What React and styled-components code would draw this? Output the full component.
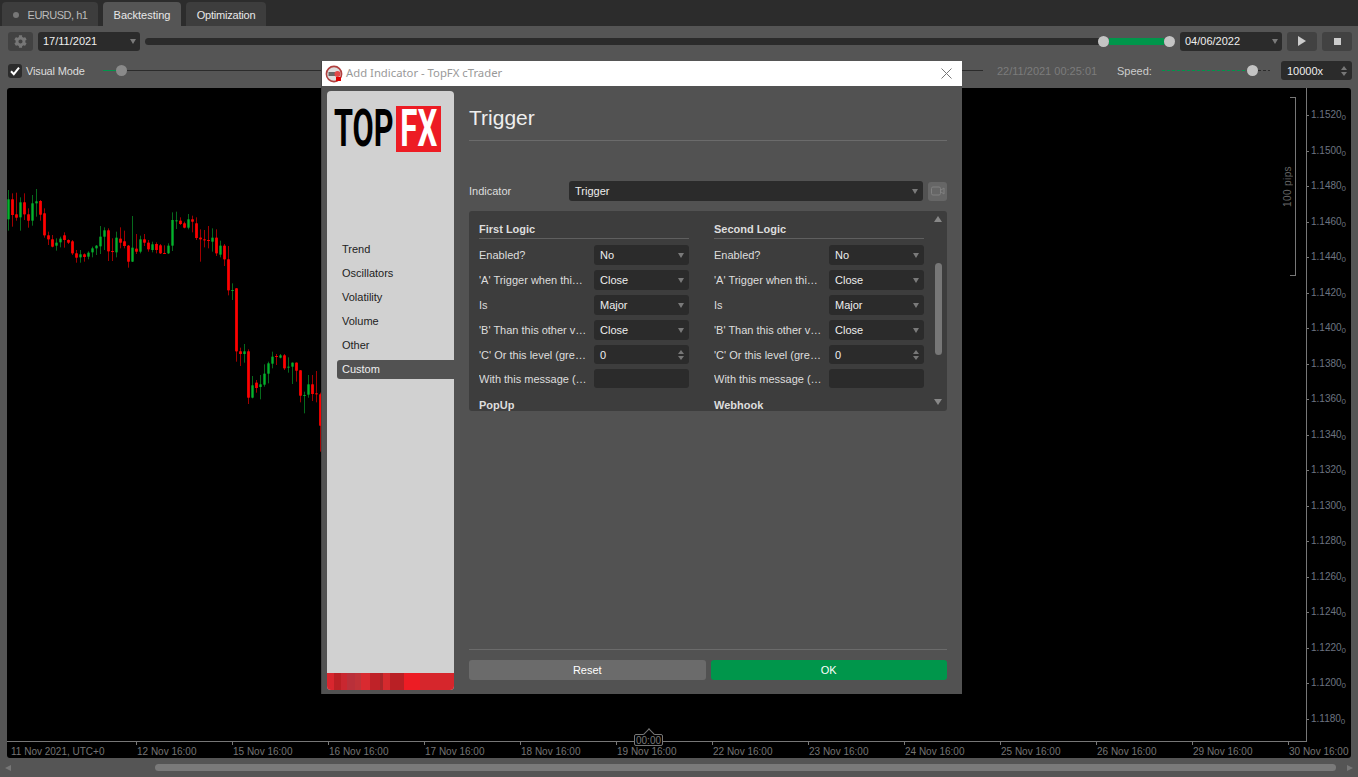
import React from 'react';
import styled, { createGlobalStyle } from 'styled-components';
import { FaCog } from 'react-icons/fa';

const GlobalStyle = createGlobalStyle`
  html, body {
    margin: 0;
    padding: 0;
    background: #555;
  }
  * {
    box-sizing: border-box;
  }
`;

// color, high, top, bottom, low -- measured off the chart
const CANDLES = [
  ['g', 60, 88, 148, 182], ['r', 70, 88, 135, 170], ['r', 68, 133, 143, 152], ['g', 82, 97, 142, 182],
  ['r', 70, 97, 133, 150], ['r', 115, 133, 152, 173], ['g', 75, 100, 152, 167], ['g', 57, 94, 100, 140],
  ['r', 90, 93, 134, 152], ['r', 115, 130, 196, 203], ['r', 185, 196, 208, 225], ['r', 195, 208, 230, 232],
  ['g', 205, 218, 227, 242], ['g', 200, 206, 217, 232], ['r', 187, 196, 210, 233], ['r', 208, 210, 218, 222],
  ['r', 210, 214, 250, 255], ['r', 240, 250, 263, 278], ['g', 240, 253, 262, 278], ['r', 250, 253, 261, 275],
  ['g', 244, 248, 260, 268], ['g', 230, 235, 247, 262], ['g', 225, 227, 235, 255], ['g', 168, 200, 229, 252],
  ['g', 172, 181, 200, 240], ['r', 175, 181, 244, 273], ['r', 205, 243, 246, 273], ['g', 185, 203, 247, 262],
  ['r', 172, 206, 218, 235], ['r', 182, 214, 228, 235], ['r', 225, 227, 275, 293], ['g', 138, 233, 275, 276],
  ['r', 192, 236, 245, 252], ['g', 197, 208, 245, 250], ['r', 192, 208, 218, 228], ['r', 210, 218, 238, 245],
  ['g', 215, 223, 240, 247], ['r', 217, 222, 240, 250], ['r', 222, 226, 250, 252], ['r', 226, 249, 251, 252],
  ['g', 220, 227, 250, 252], ['g', 127, 150, 227, 243], ['g', 125, 151, 153, 177], ['r', 142, 152, 162, 165],
  ['r', 155, 160, 173, 175], ['g', 132, 148, 173, 178], ['r', 137, 148, 155, 187], ['r', 142, 160, 204, 210],
  ['r', 178, 203, 208, 275], ['r', 180, 208, 210, 232], ['r', 168, 210, 212, 235], ['g', 175, 203, 215, 245],
  ['r', 178, 203, 250, 258], ['g', 212, 227, 254, 262], ['r', 222, 227, 268, 288], ['r', 228, 268, 361, 376],
  ['g', 340, 360, 362, 390], ['r', 355, 355, 544, 575], ['r', 533, 544, 552, 588], ['g', 522, 544, 552, 578],
  ['r', 538, 544, 683, 702], ['g', 618, 646, 683, 685], ['r', 630, 638, 654, 668], ['g', 615, 643, 651, 688],
  ['g', 583, 611, 644, 650], ['g', 575, 580, 611, 640], ['g', 545, 560, 581, 595], ['r', 552, 558, 560, 585],
  ['g', 552, 556, 563, 565], ['r', 552, 556, 595, 600], ['g', 562, 590, 592, 608], ['g', 578, 578, 590, 642],
  ['r', 578, 578, 602, 635], ['r', 601, 601, 677, 697], ['g', 665, 675, 678, 730], ['g', 615, 643, 674, 683],
  ['r', 615, 643, 672, 693], ['r', 603, 670, 672, 697], ['r', 668, 673, 767, 845],
];

const PRICES = ['1.1520', '1.1500', '1.1480', '1.1460', '1.1440', '1.1420', '1.1400', '1.1380', '1.1360', '1.1340',
  '1.1320', '1.1300', '1.1280', '1.1260', '1.1240', '1.1220', '1.1200', '1.1180'];

const DATES = ['12 Nov 16:00', '15 Nov 16:00', '16 Nov 16:00', '17 Nov 16:00', '18 Nov 16:00', '19 Nov 16:00', '22 Nov 16:00',
  '23 Nov 16:00', '24 Nov 16:00', '25 Nov 16:00', '26 Nov 16:00', '29 Nov 16:00', '30 Nov 16:00'];

const NAV = ['Trend', 'Oscillators', 'Volatility', 'Volume', 'Other', 'Custom'];

const Page = styled.div`
  position: relative;
  display: flex;
  flex-direction: column;
  width: 1358px;
  height: 777px;
  overflow: hidden;
  background: #555;
  color: #ddd;
  font: 11px 'Liberation Sans', Arial, sans-serif;
`;

const TabStrip = styled.div`
  display: flex;
  align-items: flex-end;
  gap: 5px;
  height: 26px;
  padding-left: 2px;
  background: #2c2c2c;
`;

const Tab = styled.div`
  display: flex;
  align-items: center;
  justify-content: center;
  gap: 9px;
  width: ${props => props.$width}px;
  height: 24px;
  padding-top: 2px;
  border-radius: 4px 4px 0 0;
  background: ${props => props.$active ? '#555' : '#3d3d3d'};
  color: ${props => props.$muted ? '#bbb' : '#e8e8e8'};
  letter-spacing: ${props => props.$tight || 0}px;
`;

const Dot = styled.span`
  width: 6px;
  height: 6px;
  border-radius: 50%;
  background: #777;
`;

const Toolbar = styled.div`
  display: flex;
  align-items: center;
  height: ${props => props.$height}px;
  padding: 0 6px 0 8px;
`;

const IconButton = styled.div`
  display: flex;
  align-items: center;
  justify-content: center;
  flex: none;
  width: ${props => props.$width}px;
  height: 19px;
  margin-left: ${props => props.$left || 0}px;
  border-radius: 3px;
  background: ${props => props.$bg || '#424242'};
  color: ${props => props.$color || '#ddd'};
`;

const Select = styled.div`
  display: flex;
  align-items: center;
  justify-content: space-between;
  flex: none;
  width: ${props => props.$width ? `${props.$width}px` : '100%'};
  height: ${props => props.$height || 20}px;
  margin-left: ${props => props.$left || 0}px;
  padding: 0 ${props => props.$pad || 6}px;
  border-radius: 3px;
  background: #2b2b2b;
  color: #eee;
`;

const Caret = styled.span`
  width: 0;
  height: 0;
  margin-right: -1px;
  border-left: 3px solid transparent;
  border-right: 3px solid transparent;
  border-top: 5px solid #7a7a7a;
`;

const SpinArrows = styled.span`
  display: flex;
  flex-direction: column;
  gap: 2px;
  margin-right: -1px;
  &::before, &::after {
    content: '';
    width: 0;
    height: 0;
    border-left: 3px solid transparent;
    border-right: 3px solid transparent;
  }
  &::before {
    border-bottom: 4px solid #777;
  }
  &::after {
    border-top: 4px solid #777;
  }
`;

const RangeSlider = styled.div`
  display: flex;
  align-items: center;
  flex: none;
  width: 1030px;
  margin-left: 5px;
`;

const RangeDark = styled.div`
  flex: 1;
  height: 7px;
  margin-right: -5px;
  border-radius: 4px 0 0 4px;
  background: #2b2b2b;
`;

const RangeGreen = styled.div`
  width: 55px;
  height: 7px;
  background: #00964b;
`;

const Knob = styled.span`
  position: relative;
  flex: none;
  width: ${props => props.$size || 11}px;
  height: ${props => props.$size || 11}px;
  border-radius: 50%;
  background: ${props => props.$color || '#c4c4c4'};
`;

const Check = styled.span`
  display: flex;
  align-items: center;
  justify-content: center;
  flex: none;
  width: 14px;
  height: 14px;
  border-radius: 3px;
  background: #2b2b2b;
`;

const CheckLabel = styled.span`
  width: 77px;
  margin-left: 4px;
  color: #ddd;
  letter-spacing: -.15px;
`;

const LineSlider = styled.div`
  display: flex;
  align-items: center;
  flex: none;
  width: ${props => props.$width}px;
`;

const Line = styled.span`
  width: ${props => props.$width ? `${props.$width}px` : 'auto'};
  flex: ${props => props.$width ? 'none' : 1};
  height: 1px;
  background: ${props => props.$dashed
    ? `repeating-linear-gradient(90deg, ${props.$color || '#2b2b2b'} 0 3px, transparent 3px 5px)`
    : props.$color || '#2b2b2b'};
`;

const TimeLabel = styled.span`
  width: 120px;
  margin-left: 14px;
  color: #7c7c7c;
`;

const SpeedLabel = styled.span`
  width: 45px;
  color: #ccc;
`;

const Chart = styled.div`
  display: grid;
  grid-template-columns: 1300px 44px;
  grid-template-rows: 654px 16px;
  width: 1344px;
  height: 670px;
  margin: 3px 0 0 7px;
  border-radius: 3px;
  overflow: hidden;
  background: #000;
`;

const Plot = styled.div`
  position: relative;
  grid-column: 1;
  grid-row: 1;
  border-right: 1px solid #777;
  border-bottom: 1px solid #777;
`;

const CandleSvg = styled.svg`
  display: block;
`;

const PipBracket = styled.div`
  position: absolute;
  top: 9px;
  left: 1283px;
  width: 6px;
  height: 179px;
  border: 1px solid #777;
  border-left: none;
`;

const PipLabel = styled.span`
  position: absolute;
  top: 78px;
  left: 1275px;
  color: #666;
  font-size: 10px;
  letter-spacing: .4px;
  writing-mode: vertical-rl;
  transform: rotate(180deg);
`;

const TimeMarker = styled.div`
  position: absolute;
  top: 646px;
  left: 627px;
  z-index: 2;
  width: 29px;
  height: 12px;
  border: 1px solid #777;
  border-radius: 2px;
  background: #000;
  color: #777;
  font-size: 10px;
  line-height: 11px;
  text-align: center;
  &::before {
    content: '';
    position: absolute;
    top: -5px;
    left: 10px;
    width: 7px;
    height: 7px;
    border-top: 1px solid #777;
    border-left: 1px solid #777;
    background: #000;
    transform: rotate(45deg);
    z-index: -1;
  }
`;

const PriceAxis = styled.div`
  grid-column: 2;
  grid-row: 1 / 3;
  padding-top: 19px;
`;

const Price = styled.div`
  position: relative;
  height: 35.5px;
  padding-left: 4px;
  color: #6c7480;
  font-size: 10px;
  line-height: 16px;
  &::before {
    content: '';
    position: absolute;
    top: 8px;
    left: -1px;
    width: 3px;
    border-top: 1px solid #777;
  }
  & small {
    position: relative;
    top: 2px;
    font-size: 8px;
  }
`;

const TimeAxis = styled.div`
  display: flex;
  grid-column: 1;
  grid-row: 2;
  position: relative;
  z-index: 1;
  min-width: 0;
`;

const DateCell = styled.div`
  position: relative;
  flex: none;
  width: ${props => props.$width}px;
  padding-left: ${props => props.$pad}px;
  color: #757575;
  font-size: 10px;
  line-height: 19px;
  white-space: nowrap;
  &::before {
    content: '';
    display: ${props => props.$first ? 'none' : 'block'};
    position: absolute;
    top: 0;
    left: 0;
    height: 3px;
    border-left: 1px solid #777;
  }
`;

const BottomBar = styled.div`
  display: flex;
  align-items: center;
  height: 19px;
  padding-left: 5px;
`;

const ArrowLeft = styled.span`
  width: 0;
  height: 0;
  border-top: 3px solid transparent;
  border-bottom: 3px solid transparent;
  border-right: 6px solid #777;
`;

const ArrowRight = styled.span`
  width: 0;
  height: 0;
  margin-left: 11px;
  border-top: 3px solid transparent;
  border-bottom: 3px solid transparent;
  border-left: 6px solid #777;
`;

const ScrollThumb = styled.div`
  width: 1181px;
  height: 7px;
  margin-left: 144px;
  border-radius: 4px;
  background: #7a7a7a;
`;

const Dialog = styled.div`
  position: absolute;
  top: 61px;
  left: 322px;
  display: flex;
  flex-direction: column;
  width: 640px;
  height: 633px;
  background: #525252;
  box-shadow: -1px 0 0 #444;
`;

const TitleBar = styled.div`
  display: flex;
  align-items: center;
  flex: none;
  height: 25px;
  padding: 0 10px 0 3px;
  background: #fff;
`;

const TitleText = styled.span`
  flex: 1;
  margin-left: 3px;
  padding-bottom: 2px;
  color: #999;
  font: 11.3px 'Noto Sans', 'Open Sans', sans-serif;
`;

const DialogBody = styled.div`
  display: flex;
  flex: 1;
  padding: 5px 0 4px 5px;
`;

const Sidebar = styled.div`
  display: flex;
  flex-direction: column;
  width: 127px;
  border-radius: 4px;
  overflow: hidden;
  background: #d1d1d1;
`;

const Logo = styled.div`
  display: flex;
  align-items: center;
  height: 46px;
  margin: 15px 0 0 7px;
`;

const LogoTop = styled.span`
  display: block;
  width: 62px;
  color: #000;
  font: 700 52px/46px 'Roboto', 'Liberation Sans', sans-serif;
  transform: scaleX(.59);
  transform-origin: left center;
  white-space: nowrap;
`;

const LogoBox = styled.span`
  display: flex;
  align-items: center;
  justify-content: center;
  width: 45px;
  height: 46px;
  background: #ed1c24;
  color: #fff;
  font: 700 52px/46px 'Roboto', 'Liberation Sans', sans-serif;
  & span {
    transform: scaleX(.6);
  }
`;

const Nav = styled.div`
  display: flex;
  flex-direction: column;
  gap: 5px;
  margin: 88px 0 0 10px;
`;

const NavItem = styled.div`
  height: 19px;
  padding-left: 5px;
  border-radius: 3px 0 0 3px;
  background: ${props => props.$active ? '#525252' : 'transparent'};
  color: ${props => props.$active ? '#eee' : '#222'};
  line-height: 19px;
`;

const Strip = styled.div`
  height: 17px;
  margin-top: auto;
  background: linear-gradient(90deg,
    #d8262e 0 7px, #bb2025 7px 14px, #c92730 14px 20px, #b9303a 20px 28px, #c03238 28px 34px,
    #d92a30 34px 43px, #bf2228 43px 53px, #a8262a 53px 56px, #d42a2e 56px 63px, #b92025 63px 77px,
    #ed1c24 77px 93px, #d6262c 93px);
`;

const Main = styled.div`
  display: flex;
  flex-direction: column;
  flex: 1;
  padding: 0 15px;
`;

const Heading = styled.h1`
  height: 50px;
  margin: 0;
  padding-top: 14px;
  border-bottom: 1px solid #6b6b6b;
  color: #eee;
  font: 400 21px/26px 'Liberation Sans', Arial, sans-serif;
`;

const IndicatorRow = styled.div`
  display: flex;
  align-items: center;
  margin-top: 40px;
`;

const IndicatorLabel = styled.span`
  width: 100px;
  color: #ddd;
`;

const Panel = styled.div`
  display: flex;
  flex: none;
  height: 200px;
  margin-top: 10px;
  padding-left: 10px;
  border-radius: 3px;
  overflow: hidden;
  background: #3d3d3d;
`;

const Columns = styled.div`
  display: grid;
  grid-template-columns: 210px 210px;
  gap: 25px;
`;

const Column = styled.div`
  display: flex;
  flex-direction: column;
`;

const GroupTitle = styled.div`
  flex: none;
  height: 17px;
  margin-top: ${props => props.$top}px;
  border-bottom: ${props => props.$plain ? 'none' : '1px solid #5f5f5f'};
  color: #ddd;
  font-weight: 700;
  line-height: 14px;
`;

const Rows = styled.div`
  display: flex;
  flex-direction: column;
  gap: 5px;
  margin-top: 6px;
`;

const Field = styled.div`
  display: grid;
  grid-template-columns: 115px 95px;
  align-items: center;
`;

const FieldLabel = styled.span`
  padding-right: ${props => props.$pad || 8}px;
  overflow: hidden;
  color: #ddd;
  text-overflow: ellipsis;
  white-space: nowrap;
`;

const ScrollRail = styled.div`
  display: flex;
  flex-direction: column;
  align-items: center;
  width: 23px;
  padding: 5px 0 0 5px;
`;

const RailUp = styled.span`
  width: 0;
  height: 0;
  border-left: 4px solid transparent;
  border-right: 4px solid transparent;
  border-bottom: 6px solid #888;
`;

const RailDown = styled.span`
  width: 0;
  height: 0;
  margin-top: 44px;
  border-left: 4px solid transparent;
  border-right: 4px solid transparent;
  border-top: 6px solid #888;
`;

const RailThumb = styled.div`
  flex: none;
  width: 7px;
  height: 92px;
  margin-top: 41px;
  border-radius: 4px;
  background: #777;
`;

const Footer = styled.div`
  display: flex;
  gap: 5px;
  margin-top: auto;
  padding: 10px 0;
  border-top: 1px solid #6b6b6b;
`;

const FooterButton = styled.div`
  flex: 1;
  height: 20px;
  border-radius: 3px;
  background: ${props => props.$primary ? '#00964b' : '#6b6b6b'};
  color: #fff;
  line-height: 20px;
  text-align: center;
`;

const Candle = ({ data, index }) => {
  const [color, high, top, bottom, low] = data;
  const y = v => 170 + v / 3;
  const x = 8 + index * 4;
  const isRed = color === 'r';
  const bodyHeight = Math.max(1, y(bottom) - y(top));

  return (
    <g>
      <rect x={x} y={y(high)} width="1" height={y(low) - y(high)} fill={isRed ? '#a00000' : '#066a1c'} />
      <rect x={x - 1} y={y(top)} width="3" height={bodyHeight} fill={isRed ? '#e00000' : '#067a20'} />
      <rect x={x} y={y(top)} width="1" height={bodyHeight} fill={isRed ? '#ff0000' : '#00b52a'} />
    </g>
  );
};

const LogicColumn = ({ title, next }) => (
  <Column>
    <GroupTitle $top={11}>{title}</GroupTitle>
    <Rows>
      <Field>
        <FieldLabel>Enabled?</FieldLabel>
        <Select>No<Caret /></Select>
      </Field>
      <Field>
        <FieldLabel>'A' Trigger when this value</FieldLabel>
        <Select>Close<Caret /></Select>
      </Field>
      <Field>
        <FieldLabel>Is</FieldLabel>
        <Select>Major<Caret /></Select>
      </Field>
      <Field>
        <FieldLabel $pad={4}>'B' Than this other value</FieldLabel>
        <Select>Close<Caret /></Select>
      </Field>
      <Field>
        <FieldLabel>'C' Or this level (greater than 0)</FieldLabel>
        <Select $height={19}>0<SpinArrows /></Select>
      </Field>
      <Field>
        <FieldLabel $pad={4}>With this message (optional)</FieldLabel>
        <Select $height={19} />
      </Field>
    </Rows>
    <GroupTitle $top={10} $plain>{next}</GroupTitle>
  </Column>
);

const App = () => (
  <Page>
    <GlobalStyle />
    <TabStrip>
      <Tab $width={96} $muted $tight={-.5}><Dot />EURUSD, h1</Tab>
      <Tab $width={78} $active>Backtesting</Tab>
      <Tab $width={80} $tight={-.2}>Optimization</Tab>
    </TabStrip>

    <Toolbar $height={30}>
      <IconButton $width={25} $color="#777"><FaCog size={13} /></IconButton>
      <Select $width={102} $height={19} $left={5} $pad={5}>17/11/2021<Caret /></Select>
      <RangeSlider>
        <RangeDark />
        <Knob />
        <RangeGreen />
        <Knob />
      </RangeSlider>
      <Select $width={102} $height={19} $left={5} $pad={5}>04/06/2022<Caret /></Select>
      <IconButton $width={30} $left={5}>
        <svg width="8" height="10" viewBox="0 0 8 10"><path d="M0 0 L8 5 L0 10 Z" fill="#ccc" /></svg>
      </IconButton>
      <IconButton $width={30} $left={5}>
        <svg width="7" height="7" viewBox="0 0 7 7"><rect width="7" height="7" fill="#ccc" /></svg>
      </IconButton>
    </Toolbar>

    <Toolbar $height={29}>
      <Check>
        <svg width="10" height="10" viewBox="0 0 10 10">
          <path d="M1 5.2 L3.8 8.2 L9 1.6" fill="none" stroke="#fff" strokeWidth="2" />
        </svg>
      </Check>
      <CheckLabel>Visual Mode</CheckLabel>
      <LineSlider $width={880}>
        <Line $width={13} $color="#00964b" />
        <Knob $size={11} $color="#8a8a8a" />
        <Line />
      </LineSlider>
      <TimeLabel>22/11/2021 00:25:01</TimeLabel>
      <SpeedLabel>Speed:</SpeedLabel>
      <LineSlider $width={108}>
        <Line $width={85} $color="#00964b" $dashed />
        <Knob />
        <Line $dashed />
      </LineSlider>
      <Select $width={71} $height={19} $left={11}>10000x<SpinArrows /></Select>
    </Toolbar>

    <Chart>
      <Plot>
        <CandleSvg width="1299" height="653" viewBox="7 88 1299 653">
          {CANDLES.map((candle, i) => <Candle key={i} data={candle} index={i} />)}
        </CandleSvg>
        <PipBracket />
        <PipLabel>100 pips</PipLabel>
        <TimeMarker>00:00</TimeMarker>
      </Plot>
      <PriceAxis>
        {PRICES.map(price => <Price key={price}>{price}<small>0</small></Price>)}
      </PriceAxis>
      <TimeAxis>
        <DateCell $first $width={129} $pad={4}>11 Nov 2021, UTC+0</DateCell>
        {DATES.map(date => <DateCell key={date} $width={96} $pad={1}>{date}</DateCell>)}
      </TimeAxis>
    </Chart>

    <BottomBar>
      <ArrowLeft />
      <ScrollThumb />
      <ArrowRight />
    </BottomBar>

    <Dialog>
      <TitleBar>
        <svg width="18" height="18" viewBox="0 0 18 18">
          <circle cx="9" cy="9" r="7.6" fill="#ddd" stroke="#b0403f" strokeWidth="1.6" />
          <rect x="3.5" y="7" width="7" height="4" fill="#666" />
          <circle cx="12.5" cy="9" r="3" fill="#e04848" />
          <rect x="11" y="12" width="5" height="4" fill="#e00000" />
        </svg>
        <TitleText>Add Indicator - TopFX cTrader</TitleText>
        <svg width="11" height="11" viewBox="0 0 11 11">
          <path d="M.5 .5 L10.5 10.5 M10.5 .5 L.5 10.5" stroke="#777" strokeWidth="1" fill="none" />
        </svg>
      </TitleBar>
      <DialogBody>
        <Sidebar>
          <Logo>
            <LogoTop>TOP</LogoTop>
            <LogoBox><span>FX</span></LogoBox>
          </Logo>
          <Nav>
            {NAV.map(item => <NavItem key={item} $active={item === 'Custom'}>{item}</NavItem>)}
          </Nav>
          <Strip />
        </Sidebar>
        <Main>
          <Heading>Trigger</Heading>
          <IndicatorRow>
            <IndicatorLabel>Indicator</IndicatorLabel>
            <Select $width={354}>Trigger<Caret /></Select>
            <IconButton $width={19} $left={5} $bg="#666">
              <svg width="14" height="10" viewBox="0 0 14 10">
                <rect x=".5" y="1" width="9" height="8" rx="1.5" fill="none" stroke="#808080" />
                <path d="M10 4 L13 2 V8 L10 6" fill="none" stroke="#808080" />
              </svg>
            </IconButton>
          </IndicatorRow>
          <Panel>
            <Columns>
              <LogicColumn title="First Logic" next="PopUp" />
              <LogicColumn title="Second Logic" next="Webhook" />
            </Columns>
            <ScrollRail>
              <RailUp />
              <RailThumb />
              <RailDown />
            </ScrollRail>
          </Panel>
          <Footer>
            <FooterButton>Reset</FooterButton>
            <FooterButton $primary>OK</FooterButton>
          </Footer>
        </Main>
      </DialogBody>
    </Dialog>
  </Page>
);

export default App;
